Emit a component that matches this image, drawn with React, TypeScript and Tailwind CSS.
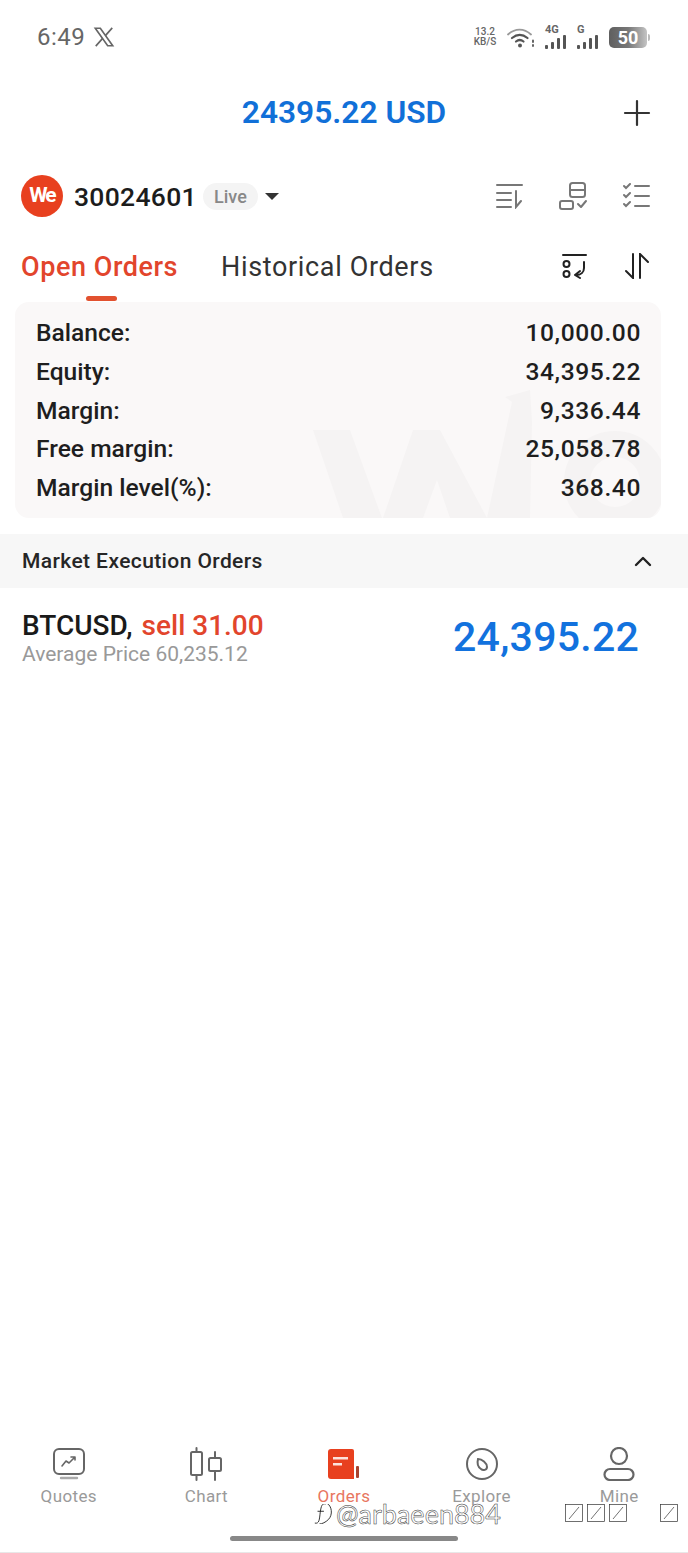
import React from 'react';

const rows = [
    ['Balance:', '10,000.00'],
    ['Equity:', '34,395.22'],
    ['Margin:', '9,336.44'],
    ['Free margin:', '25,058.78'],
    ['Margin level(%):', '368.40'],
];

const Bars = () => (
    <div className="absolute left-0 bottom-0 flex items-end gap-[3px]">
        <div className="w-[3px] h-[4px] rounded-[1px] bg-[#555]" />
        <div className="w-[3px] h-[7px] rounded-[1px] bg-[#555]" />
        <div className="w-[3px] h-[11px] rounded-[1px] bg-[#555]" />
        <div className="w-[3px] h-[14px] rounded-[1px] bg-[#555]" />
    </div>
);

const StatusIcons = () => (
    <div className="flex items-center text-[#555]">
        <div className="flex flex-col items-center w-[26px] text-[10px] leading-[10px] font-medium text-[#666]">
            <span>13.2</span>
            <span>KB/S</span>
        </div>
        <svg className="ml-[9px]" width="28" height="24" viewBox="0 0 28 24" fill="none" stroke="#555" strokeLinecap="round">
            <path d="M1 9.5C8 3 17 3 24 9.5" strokeWidth="1.8" stroke="#999" />
            <path d="M5 13C10 9 15.5 9 20.5 13" strokeWidth="2.2" />
            <path d="M9 16.5C11.5 14.5 14 14.5 16.5 16.5" strokeWidth="2.2" />
            <circle cx="13" cy="20.5" r="2" fill="#555" stroke="none" />
            <path d="M26 15.5V17M26 20V21" strokeWidth="1.8" />
        </svg>
        <div className="ml-[10px] relative w-[22px] h-[24px]">
            <span className="absolute left-0 top-[-1px] text-[11px] leading-[11px] font-bold text-[#666]">4G</span>
            <Bars />
        </div>
        <div className="ml-[10px] relative w-[22px] h-[24px]">
            <span className="absolute left-0 top-[-1px] text-[11px] leading-[11px] font-bold text-[#666]">G</span>
            <Bars />
        </div>
        <div className="ml-[10px] w-[38px] h-[21px] rounded-[5px] bg-gradient-to-r from-[#5f5f5f] via-[#777] to-[#c4c4c4] flex items-center justify-center text-white text-[18px] font-bold">
            50
        </div>
        <div className="ml-[1px] w-[2px] h-[7px] rounded-r bg-[#bbb]" />
    </div>
);

const Tofu = () => (
    <svg width="18" height="18" viewBox="0 0 18 18" fill="white" stroke="#333" strokeWidth="0.7">
        <rect x="0.5" y="0.5" width="17" height="17" />
        <path d="M4 15L14 3" />
    </svg>
);

const NavItem = ({ label, active, children }: { label: string; active?: boolean; children: React.ReactNode }) => (
    <div className="w-[138px] flex flex-col items-center">
        <div className="h-[38px] flex items-center justify-center">{children}</div>
        <span className={`mt-[5px] text-[17px] leading-[16px] tracking-[0.4px] ${active ? 'text-[#e8765f]' : 'text-[#9a9a9a]'}`}>{label}</span>
    </div>
);

export default function App() {
    return (
        <div className="relative w-[688px] h-[1553px] bg-white overflow-hidden flex flex-col font-['Roboto',sans-serif]">
            {/* status bar */}
            <div className="h-[74px] shrink-0 flex items-center justify-between pl-[37px] pr-[38px]">
                <div className="flex items-center gap-[8px] text-[#666]">
                    <span className="text-[24px] tracking-[0.5px]">6:49</span>
                    <svg width="22" height="22" viewBox="0 0 24 24" fill="none" stroke="#666" strokeWidth="1.8">
                        <path d="M2.5 2.5H8L21.5 21.5H16Z" />
                        <path d="M21 2L13.5 10.5M10.5 13.5L3 22" />
                    </svg>
                </div>
                <StatusIcons />
            </div>

            {/* title */}
            <div className="relative h-[78px] shrink-0 flex items-center justify-center">
                <span className="text-[31.7px] font-semibold text-[#1170d8] mt-[-1px]">24395.22 USD</span>
                <svg className="absolute right-[36px] top-[24px]" width="30" height="30" viewBox="0 0 30 30" stroke="#333" strokeWidth="2.2" strokeLinecap="round">
                    <path d="M15 3V27M3 15H27" />
                </svg>
            </div>

            {/* account row */}
            <div className="h-[88px] shrink-0 flex items-center pl-[21px] pr-[38px]">
                <div className="w-[42px] h-[42px] rounded-full bg-[#e8401f] flex items-center justify-center text-white text-[21px] font-bold tracking-[-2px]">
                    We
                </div>
                <span className="ml-[11px] mt-[2px] text-[26.5px] font-medium text-[#1c1c1c] tracking-[0.3px]">30024601</span>
                <span className="ml-[6px] h-[27px] w-[55px] rounded-full bg-[#f4f4f4] flex items-center justify-center text-[18px] font-medium text-[#888]">Live</span>
                <div className="ml-[7px] w-0 h-0 border-x-[7px] border-x-transparent border-t-[7px] border-t-[#333]" />
                <div className="ml-auto flex items-center gap-[35px]">
                    <svg width="28" height="26" viewBox="0 0 28 26" fill="none" stroke="#777" strokeWidth="2" strokeLinecap="round">
                        <path d="M1 2H26M1 10H15M1 17H15M1 24H15M20 8V24L25 18" />
                    </svg>
                    <svg width="29" height="28" viewBox="0 0 29 28" fill="none" stroke="#777" strokeWidth="2" strokeLinejoin="round">
                        <rect x="11" y="1" width="15" height="14" rx="2.5" />
                        <path d="M11 8H26" />
                        <rect x="1" y="19" width="13" height="8" rx="2" />
                        <path d="M19 22L22 25L27 19" strokeLinecap="round" />
                    </svg>
                    <svg width="27" height="26" viewBox="0 0 27 26" fill="none" stroke="#777" strokeWidth="2" strokeLinecap="round">
                        <path d="M1 3L3 5L7 1M1 12L3 14L7 10M1 21L3 23L7 19M12 3H26M12 13H26M12 23H26" />
                    </svg>
                </div>
            </div>

            {/* tabs */}
            <div className="relative h-[52px] shrink-0 flex items-center pl-[21px] pr-[39px]">
                <span className="mt-[2px] text-[27px] font-medium text-[#e2452c] tracking-[0.55px]">Open Orders</span>
                <span className="mt-[2px] ml-[43px] text-[27px] text-[#333] tracking-[0.65px]">Historical Orders</span>
                <div className="absolute left-[86px] bottom-[-9px] w-[31px] h-[5px] rounded-full bg-[#e2512f]" />
                <div className="ml-auto flex items-center gap-[38px]">
                    <svg width="25" height="26" viewBox="0 0 25 26" fill="none" stroke="#222" strokeWidth="2" strokeLinecap="round">
                        <path d="M1 2H24" />
                        <circle cx="4.5" cy="11" r="3" />
                        <circle cx="4.5" cy="21" r="3" />
                        <path d="M22 9V15C22 19 19 22 14 22M18 18L13 22L18 25" strokeLinejoin="round" />
                    </svg>
                    <svg width="24" height="26" viewBox="0 0 24 26" fill="none" stroke="#222" strokeWidth="2" strokeLinecap="round">
                        <path d="M8 1V25L1 18M15 25V1L23 9" />
                    </svg>
                </div>
            </div>

            {/* account summary */}
            <div className="relative mt-[10px] mx-[15px] w-[646px] h-[216px] shrink-0 rounded-[14px] bg-[#faf8f8] overflow-hidden pl-[21px] pr-[20px] pt-[12px]">
                <svg className="absolute left-0 top-0" width="646" height="216" viewBox="0 0 646 216" fill="#f5f3f3">
                    <path d="M298 128H335L367 216H328Z" />
                    <path d="M368 216L398 128H425L472 216H435L422 178L408 216Z" />
                    <path d="M472 216L497 100L490 95L515 88L517 120L515 216Z" />
                    <circle cx="600" cy="180" r="38" fill="none" stroke="#f5f3f3" strokeWidth="26" />
                </svg>
                <div className="relative flex flex-col">
                    {rows.map(([label, value]) => (
                        <div key={label} className="h-[38.8px] flex items-center justify-between text-[24.6px] font-medium text-[#1e1e1e]">
                            <span>{label}</span>
                            <span className="tracking-[0.6px]">{value}</span>
                        </div>
                    ))}
                </div>
            </div>

            {/* section header */}
            <div className="mt-[16px] h-[54px] shrink-0 bg-[#f7f7f7] flex items-center justify-between pl-[22px] pr-[36px]">
                <span className="mt-[2px] text-[21px] font-medium text-[#262626] tracking-[0.4px]">Market Execution Orders</span>
                <svg width="18" height="12" viewBox="0 0 18 12" fill="none" stroke="#222" strokeWidth="2.4" strokeLinecap="round" strokeLinejoin="round">
                    <path d="M2 10L9 3L16 10" />
                </svg>
            </div>

            {/* order row */}
            <div className="h-[100px] shrink-0 flex items-center justify-between pl-[22px] pr-[49px]">
                <div className="flex flex-col mt-[-2px]">
                    <div className="leading-[34px] text-[28px] font-medium">
                        <span className="text-[#1a1a1a]">BTCUSD,</span>
                        <span className="ml-[9px] text-[#e2452c]">sell 31.00</span>
                    </div>
                    <span className="text-[21px] leading-[22px] text-[#999]">Average Price 60,235.12</span>
                </div>
                <span className="text-[41px] font-medium text-[#1272de] tracking-[0.25px]">24,395.22</span>
            </div>

            {/* bottom nav */}
            <div className="mt-auto h-[120px] shrink-0 relative">
                <div className="flex pt-[12px]">
                    <NavItem label="Quotes">
                        <svg width="32" height="32" viewBox="0 0 32 32" fill="none" stroke="#666" strokeWidth="2" strokeLinecap="round" strokeLinejoin="round">
                            <rect x="1" y="1" width="30" height="25" rx="5" />
                            <path d="M9 18L13 13L16 15L22 9M18 9H22V12" strokeWidth="1.6" />
                            <path d="M8 30H24" stroke="#aaa" strokeWidth="2.4" />
                        </svg>
                    </NavItem>
                    <NavItem label="Chart">
                        <svg width="34" height="34" viewBox="0 0 34 34" fill="none" stroke="#666" strokeWidth="2" strokeLinecap="round">
                            <rect x="2" y="5" width="11" height="23" rx="1.5" />
                            <path d="M7.5 1V5M7.5 28V33" />
                            <rect x="20" y="11" width="12" height="13" rx="1.5" />
                            <path d="M26 5V11M26 24V33" />
                        </svg>
                    </NavItem>
                    <NavItem label="Orders" active>
                        <svg width="32" height="30" viewBox="0 0 32 30" fill="#e8401f">
                            <path d="M3 0H24Q26 0 26 2V30H3Q0 30 0 27V3Q0 0 3 0Z" />
                            <rect x="5" y="8" width="15" height="2.5" fill="#fff" fillOpacity="0.85" />
                            <rect x="5" y="14" width="9" height="2.5" fill="#fff" fillOpacity="0.85" />
                            <rect x="28" y="17" width="3" height="12" rx="1" fill="#a8432f" />
                        </svg>
                    </NavItem>
                    <NavItem label="Explore">
                        <svg width="34" height="34" viewBox="0 0 34 34" fill="none" stroke="#666" strokeWidth="2">
                            <circle cx="17" cy="17" r="15" />
                            <path d="M13 12C17 12 22 16 22 20C22 23 18 24 16 22C13 20 12 16 13 12Z" />
                        </svg>
                    </NavItem>
                    <NavItem label="Mine">
                        <svg width="32" height="34" viewBox="0 0 32 34" fill="none" stroke="#666" strokeWidth="2.2">
                            <circle cx="16" cy="9" r="8" />
                            <rect x="1.5" y="22" width="29" height="11" rx="5.5" />
                        </svg>
                    </NavItem>
                </div>
                <div className="absolute left-[230px] top-[103px] w-[228px] h-[5px] rounded-full bg-[#888]" />
                <div className="absolute left-0 right-0 bottom-0 h-[1px] bg-[#e8e8e8]" />
            </div>

            {/* video watermark laid over the nav */}
            <div className="absolute left-[311px] top-[1504px] flex items-center antialiased">
                <svg width="24" height="20" viewBox="0 3 24 22" fill="none" stroke="#222" strokeWidth="1">
                    <path d="M3 24C8 25 8 20 9 12C10 5 11 2 15 3M6 11H13" />
                    <path d="M16 2C22 5 23 15 18 20C15 23 11 25 8 25" />
                </svg>
                <span className="ml-[1px] font-['Lato',sans-serif] text-[27px] leading-[20px] text-white [-webkit-text-stroke:0.5px_#333]">@arbaeen884</span>
            </div>
            <div className="absolute left-[565px] top-[1504px] flex gap-[4px]">
                <Tofu />
                <Tofu />
                <Tofu />
                <div className="ml-[29px]">
                    <Tofu />
                </div>
            </div>
        </div>
    );
}
